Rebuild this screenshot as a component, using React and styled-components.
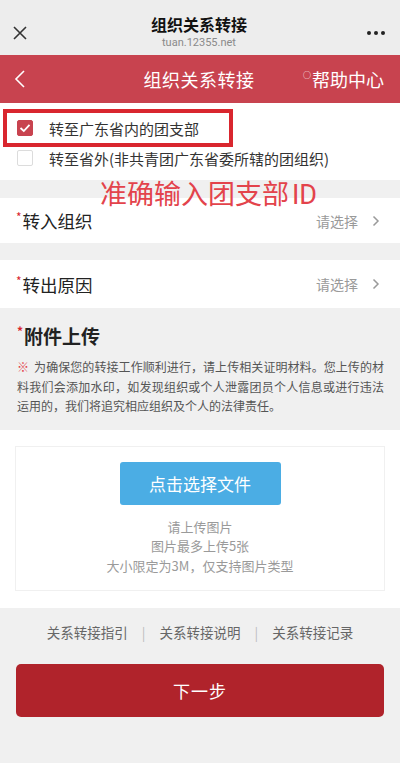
import React from "react";
import styled, { createGlobalStyle } from "styled-components";

const GlobalStyle = createGlobalStyle`
  html, body {
    margin: 0;
    padding: 0;
    background: #f0f0f0;
  }
  body {
    font-family: "Noto Sans CJK SC", "Noto Sans", sans-serif;
    color: #222;
  }
  * { box-sizing: border-box; }
`;

const Page = styled.div`
  width: 400px;
  min-height: 763px;
  background: #f0f0f0;
  display: flex;
  flex-direction: column;
`;

const TopBar = styled.div`
  height: 55px;
  background: #ededed;
  display: flex;
  align-items: center;
  justify-content: space-between;
  padding: 0 14px 0 12px;
`;

const TopTitle = styled.div`
  display: flex;
  flex-direction: column;
  align-items: center;
  padding-top: 8px;
`;

const TopName = styled.div`
  font-size: 16px;
  font-weight: 700;
  color: #111;
  line-height: 22px;
`;

const TopUrl = styled.div`
  font-family: "Roboto", "Liberation Sans", sans-serif;
  font-size: 11px;
  color: #8a8a8a;
  line-height: 16px;
`;

const IconSlot = styled.div`
  width: 28px;
  display: flex;
  justify-content: ${(p) => (p.right ? "flex-end" : "flex-start")};
  align-items: center;
  padding-top: 10px;
`;

const Header = styled.div`
  height: 48px;
  background: #c8434f;
  display: grid;
  grid-template-columns: 100px 1fr 100px;
  align-items: center;
  color: #fff;
  padding: 0 16px 0 14px;
`;

const HeaderTitle = styled.div`
  text-align: center;
  font-size: 18px;
  letter-spacing: 0.5px;
`;

const HelpLink = styled.div`
  text-align: right;
  font-size: 18px;
  white-space: nowrap;
  sup {
    font-size: 8px;
    vertical-align: 9px;
    margin-right: 1px;
  }
`;

const Options = styled.div`
  background: #fff;
  padding: 6px 0 11px 3px;
`;

const OptionRow = styled.div`
  display: flex;
  align-items: center;
  gap: 16px;
  width: ${(p) => (p.boxed ? "230px" : "auto")};
  height: ${(p) => (p.boxed ? "38px" : "22px")};
  padding-left: ${(p) => (p.boxed ? "10px" : "14px")};
  border: ${(p) => (p.boxed ? "4px solid #d9262e" : "none")};
`;

const Check = styled.span`
  width: 16px;
  height: 16px;
  flex: none;
  border-radius: 2px;
  display: flex;
  align-items: center;
  justify-content: center;
  background: ${(p) => (p.checked ? "#c8434f" : "#fff")};
  border: 1px solid ${(p) => (p.checked ? "#c8434f" : "#dcdcdc")};
`;

const OptionText = styled.span`
  font-size: 15px;
  color: #333;
  white-space: nowrap;
`;

const Gap = styled.div`
  height: ${(p) => p.h}px;
  position: relative;
`;

const Annotation = styled.div`
  position: absolute;
  left: 100px;
  top: -4px;
  font-size: 27px;
  line-height: 34px;
  color: #e3434b;
  white-space: nowrap;
  z-index: 2;
  span {
    font-family: "Roboto", "Liberation Sans", sans-serif;
    margin-left: 3px;
  }
`;

const SelectRow = styled.div`
  height: ${(p) => p.h || 46}px;
  background: #fff;
  display: flex;
  align-items: center;
  justify-content: space-between;
  padding: 0 20px 0 16px;
`;

const Label = styled.div`
  font-size: 17.5px;
  color: #222;
  display: flex;
  align-items: flex-start;
  i {
    font-style: normal;
    color: #d9262e;
    font-size: 12px;
    line-height: 18px;
    margin-right: 1px;
  }
`;

const Placeholder = styled.div`
  font-size: 14px;
  color: #9a9a9a;
  display: flex;
  align-items: center;
  gap: 14px;
`;

const UploadSection = styled.div`
  padding: 14px 16px 14px 17px;
`;

const SectionHeading = styled(Label)`
  font-size: 19px;
  font-weight: 700;
  margin-bottom: 8px;
`;

const Notice = styled.p`
  margin: 0;
  font-size: 12px;
  line-height: 19.5px;
  color: #555;
  text-align: justify;
`;

const Mark = styled.span`
  display: inline-block;
  color: #e3434b;
  margin-right: 5px;
`;

const UploadArea = styled.div`
  background: #fff;
  padding: 16px 15px 17px 15px;
`;

const UploadBox = styled.div`
  border: 1px solid #f0f0f0;
  display: flex;
  flex-direction: column;
  align-items: center;
  padding: 15px 0 15px;
`;

const ChooseButton = styled.div`
  width: 161px;
  height: 43px;
  background: #4bade4;
  border-radius: 3px;
  color: #fff;
  font-size: 17px;
  display: flex;
  align-items: center;
  justify-content: center;
  margin-bottom: 12px;
`;

const Hint = styled.div`
  font-size: 13px;
  line-height: 19.5px;
  color: #9a9a9a;
  text-align: center;
`;

const Links = styled.div`
  display: flex;
  justify-content: center;
  align-items: center;
  gap: 14px;
  padding: 14px 0 22px;
  font-size: 13.5px;
  color: #666;
`;

const Sep = styled.span`
  color: #bdbdbd;
`;

const NextButton = styled.div`
  margin: 0 16px 0 16px;
  height: 53px;
  background: #b0232b;
  border-radius: 5px;
  color: #fff;
  font-size: 17px;
  letter-spacing: 1px;
  display: flex;
  align-items: center;
  justify-content: center;
`;

const CloseIcon = () => (
  <svg width="16" height="16" viewBox="0 0 16 16">
    <path d="M2 2 L14 14 M14 2 L2 14" stroke="#333" strokeWidth="1.6" fill="none" />
  </svg>
);

const MoreIcon = () => (
  <svg width="20" height="6" viewBox="0 0 20 6">
    <circle cx="3" cy="3" r="2" fill="#222" />
    <circle cx="10" cy="3" r="2" fill="#222" />
    <circle cx="17" cy="3" r="2" fill="#222" />
  </svg>
);

const BackIcon = () => (
  <svg width="12" height="18" viewBox="0 0 12 18">
    <path d="M10 1 L2 9 L10 17" stroke="#fff" strokeWidth="1.6" fill="none" />
  </svg>
);

const Chevron = () => (
  <svg width="8" height="12" viewBox="0 0 8 12">
    <path d="M1.5 1.5 L6 6 L1.5 10.5" stroke="#9a9a9a" strokeWidth="1.5" fill="none" />
  </svg>
);

const Tick = () => (
  <svg width="12" height="10" viewBox="0 0 12 10">
    <path d="M1.5 5 L4.8 8 L10.5 1.8" stroke="#fff" strokeWidth="1.8" fill="none" />
  </svg>
);

const App = () => {
  const links = ["关系转接指引", "关系转接说明", "关系转接记录"];
  return (
    <Page>
      <GlobalStyle />
      <TopBar>
        <IconSlot>
          <CloseIcon />
        </IconSlot>
        <TopTitle>
          <TopName>组织关系转接</TopName>
          <TopUrl>tuan.12355.net</TopUrl>
        </TopTitle>
        <IconSlot right>
          <MoreIcon />
        </IconSlot>
      </TopBar>

      <Header>
        <BackIcon />
        <HeaderTitle>组织关系转接</HeaderTitle>
        <HelpLink>
          <sup>○</sup>帮助中心
        </HelpLink>
      </Header>

      <Options>
        <OptionRow boxed>
          <Check checked>
            <Tick />
          </Check>
          <OptionText>转至广东省内的团支部</OptionText>
        </OptionRow>
        <OptionRow>
          <Check />
          <OptionText>转至省外(非共青团广东省委所辖的团组织)</OptionText>
        </OptionRow>
      </Options>

      <Gap h={18}>
        <Annotation>
          准确输入团支部<span>ID</span>
        </Annotation>
      </Gap>

      <SelectRow h={45}>
        <Label>
          <i>*</i>转入组织
        </Label>
        <Placeholder>
          请选择 <Chevron />
        </Placeholder>
      </SelectRow>

      <Gap h={17} />

      <SelectRow h={48}>
        <Label>
          <i>*</i>转出原因
        </Label>
        <Placeholder>
          请选择 <Chevron />
        </Placeholder>
      </SelectRow>

      <UploadSection>
        <SectionHeading>
          <i>*</i>附件上传
        </SectionHeading>
        <Notice>
          <Mark>※</Mark>为确保您的转接工作顺利进行，请上传相关证明材料。您上传的材料我们会添加水印，如发现组织或个人泄露团员个人信息或进行违法运用的，我们将追究相应组织及个人的法律责任。
        </Notice>
      </UploadSection>

      <UploadArea>
        <UploadBox>
          <ChooseButton>点击选择文件</ChooseButton>
          <Hint>请上传图片</Hint>
          <Hint>图片最多上传5张</Hint>
          <Hint>大小限定为3M，仅支持图片类型</Hint>
        </UploadBox>
      </UploadArea>

      <Links>
        {links.map((l, idx) => (
          <React.Fragment key={l}>
            <span>{l}</span>
            {idx < links.length - 1 && <Sep>|</Sep>}
          </React.Fragment>
        ))}
      </Links>

      <NextButton>下一步</NextButton>
    </Page>
  );
};

export default App;
